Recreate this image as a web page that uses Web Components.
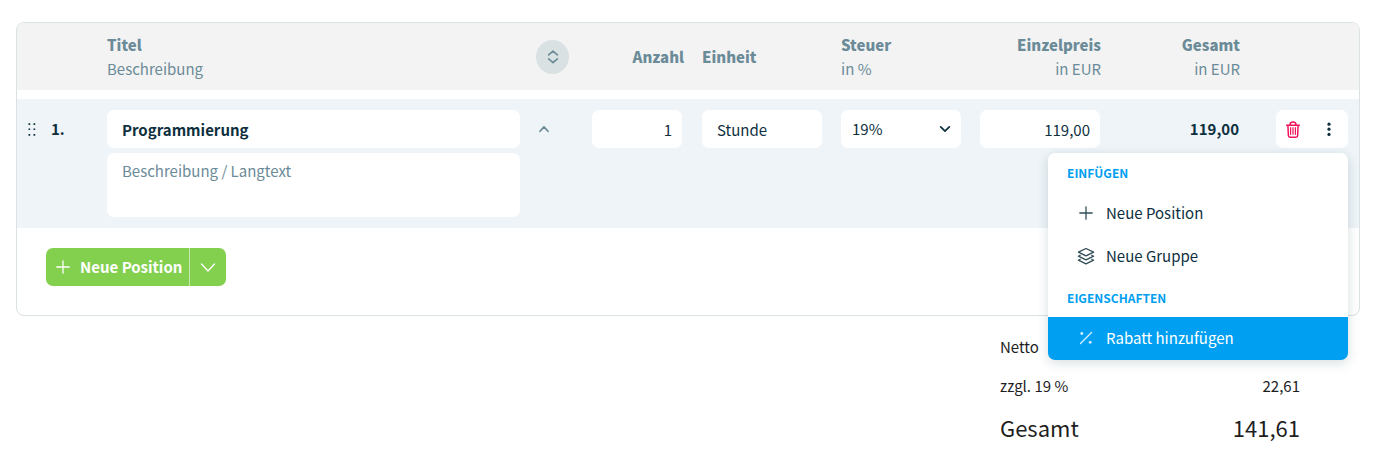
<!DOCTYPE html>
<html lang="de">
<head>
<meta charset="utf-8">
<meta name="viewport" content="width=device-width, initial-scale=1">
<title>Positionen</title>
<style>
  :root {
    --ink: #0e2f3e;
    --muted: #6b8b98;
    --line: #dae2e4;
    --head: #f3f3f3;
    --row: #eef4f8;
    --green: #83cf4e;
    --blue: #009ff1;
    --pink: #f0145a;
    --radius: 7px;
  }
  body {
    margin: 0;
    padding: 22px 17px 16px 16px;
    background: #fff;
    color: var(--ink);
    font: 400 15px/24px "Noto Sans CJK SC", "Noto Sans", sans-serif;
  }
</style>
</head>
<body>
<line-items></line-items>
<totals-panel>
  <total-row label="Netto">119,00</total-row>
  <total-row label="zzgl. 19 %">22,61</total-row>
  <total-row label="Gesamt" grand>141,61</total-row>
</totals-panel>

<script>
const define = (name, html, setup) => {
  const template = document.createElement('template');
  template.innerHTML = html;
  customElements.define(name, class extends HTMLElement {
    connectedCallback() {
      if (this.shadowRoot) return;
      this.attachShadow({ mode: 'open' }).append(template.content.cloneNode(true));
      if (setup) setup(this, this.shadowRoot);
    }
  });
};

const icons = {
  grip: '<path d="M3.500 2.200h1.700v1.700H3.500zM8.500 2.200h1.700v1.700H8.500zM3.500 7.400h1.700v1.700H3.500zM8.500 7.400h1.700v1.700H8.500zM3.500 13h1.700v1.700H3.500zM8.500 13h1.700v1.700H8.500z" fill="currentColor" stroke="none"/>',
  sort: '<path d="M3 5.600 8 1.400 13 5.600M3 10.200 8 14.400 13 10.200" stroke-width="1.900"/>',
  up: '<path d="M3.400 10.600 8 5.600l4.600 5" stroke-width="2"/>',
  down: '<path d="m3.700 5.800 4.300 4.400 4.300-4.400" stroke-width="1.700"/>',
  wide: '<path d="m1.500 5 6.500 7 6.500-7" stroke-width="1.300"/>',
  plus: '<path d="M8 1.800v12.400M1.800 8h12.400" stroke-width="1.300"/>',
  trash: '<path d="M1.600 4.200h12.800M5 4c0-4 6-4 6 0M2.900 4.400l.500 10.400c.1 1 .600 1.400 1.500 1.400h6.200c.900 0 1.400-.400 1.500-1.400l.500-10.400" stroke-width="1.500"/><path d="M5.600 6.700v6.600M8 6.700v6.600M10.400 6.700v6.600" stroke-width="1.200"/>',
  dots: '<g fill="currentColor" stroke="none"><circle cx="8" cy="3.200" r="1.600"/><circle cx="8" cy="8.200" r="1.600"/><circle cx="8" cy="13.400" r="1.600"/></g>',
  layers: '<path d="M8 .500 15.600 4.200 8 7.900.400 4.200zM2.200 7.200.400 8.200 8 11.900l7.600-3.700-1.800-1M2.200 11.200.400 12.200 8 15.900l7.600-3.700-1.800-1" stroke-width="1.300"/>',
  percent: '<path d="M2.500 13.500 13.500 2.500" stroke-width="1.400"/><g fill="currentColor" stroke="none"><circle cx="3.800" cy="3.500" r="1.400"/><circle cx="12.200" cy="12.300" r="1.400"/></g>'
};

define('ui-icon', `
  <style>
    :host { display: inline-flex; flex: none; width: 16px; height: 16px; }
    svg { width: 100%; height: 100%; fill: none; stroke: currentColor; stroke-linecap: round; stroke-linejoin: round; overflow: visible; }
  </style>
  <svg viewBox="0 0 16 16" aria-hidden="true"></svg>`,
  (host, root) => { root.querySelector('svg').innerHTML = icons[host.getAttribute('name')] || ''; });

define('icon-button', `
  <style>
    :host { display: inline-flex; }
    button { display: flex; align-items: center; justify-content: center; width: 100%; height: 100%; margin: 0; padding: 0; border: 0; border-radius: inherit; background: none; color: inherit; cursor: pointer; }
  </style>
  <button type="button"><slot></slot></button>`,
  (host, root) => root.querySelector('button').setAttribute('aria-label', host.getAttribute('label')));

define('text-field', `
  <style>
    :host { display: block; }
    input { display: block; box-sizing: border-box; width: 100%; height: 38px; margin: 0; padding: 0 10px 0 15px; border: 0; border-radius: var(--radius); background: #fff; color: inherit; font: inherit; text-align: inherit; }
  </style>
  <input type="text">`,
  (host, root) => {
    const input = root.querySelector('input');
    input.value = host.getAttribute('value') || '';
    input.setAttribute('aria-label', host.getAttribute('label'));
  });

define('note-field', `
  <style>
    :host { display: block; }
    textarea { display: block; box-sizing: border-box; width: 100%; height: 64px; margin: 0; padding: 6px 15px; border: 0; border-radius: var(--radius); background: #fff; color: inherit; font: inherit; resize: none; }
    textarea::placeholder { color: var(--muted); opacity: 1; }
  </style>
  <textarea></textarea>`,
  (host, root) => {
    const area = root.querySelector('textarea');
    area.placeholder = host.getAttribute('label');
    area.setAttribute('aria-label', host.getAttribute('label'));
  });

define('tax-select', `
  <style>
    :host { display: grid; align-items: center; }
    select, ui-icon { grid-area: 1 / 1; }
    select { appearance: none; width: 100%; height: 38px; margin: 0; padding: 0 30px 0 11px; border: 0; border-radius: var(--radius); background: #fff; color: inherit; font: inherit; }
    ui-icon { justify-self: end; margin-right: 8px; pointer-events: none; }
  </style>
  <select aria-label="Steuer in %"><option selected>19%</option></select>
  <ui-icon name="down"></ui-icon>`);

define('menu-heading', `
  <style>
    :host { display: block; padding: 8px 19px 7px; color: var(--blue); font-size: 12px; font-weight: 700; text-transform: uppercase; }
  </style>
  <slot></slot>`);

define('menu-item', `
  <style>
    :host { display: block; }
    button { display: flex; align-items: center; gap: 12px; box-sizing: border-box; width: 100%; height: 43px; margin: 0; padding: 0 30px 2px; border: 0; background: none; color: inherit; font: inherit; text-align: left; cursor: pointer; }
    ui-icon { opacity: .85; }
    :host([active]) button { background: var(--blue); color: #fff; }
  </style>
  <button type="button" role="menuitem"><ui-icon></ui-icon><slot></slot></button>`,
  (host, root) => {
    const icon = document.createElement('ui-icon');
    icon.setAttribute('name', host.getAttribute('icon'));
    root.querySelector('ui-icon').replaceWith(icon);
  });

define('context-menu', `
  <style>
    :host { display: block; width: 300px; overflow: hidden; border-radius: var(--radius); background: #fff; box-shadow: 0 3px 12px rgba(14, 47, 62, .16); }
  </style>
  <div role="menu"><slot></slot></div>`);

define('row-actions', `
  <style>
    :host { position: relative; display: flex; width: 72px; height: 38px; border-radius: var(--radius); background: #fff; }
    icon-button { flex: 1; }
    .delete { flex: none; width: 34px; color: var(--pink); }
    context-menu { position: absolute; z-index: 1; top: calc(100% + 5px); right: 0; }
  </style>
  <icon-button class="delete" label="Position löschen"><ui-icon name="trash"></ui-icon></icon-button>
  <icon-button label="Weitere Aktionen"><ui-icon name="dots"></ui-icon></icon-button>
  <context-menu>
    <menu-heading>Einfügen</menu-heading>
    <menu-item icon="plus">Neue Position</menu-item>
    <menu-item icon="layers">Neue Gruppe</menu-item>
    <menu-heading>Eigenschaften</menu-heading>
    <menu-item icon="percent" active>Rabatt hinzufügen</menu-item>
  </context-menu>`);

define('split-button', `
  <style>
    :host { display: inline-flex; overflow: hidden; border-radius: var(--radius); background: var(--green); color: #fff; }
    button { display: flex; align-items: center; height: 38px; margin: 0; border: 0; background: none; color: inherit; font: inherit; font-weight: 700; cursor: pointer; }
    .main { gap: 9px; padding: 0 7px 0 9px; }
    .more { justify-content: center; width: 37px; padding: 0; border-left: 1px solid #c8eab2; }
  </style>
  <button class="main" type="button"><ui-icon name="plus"></ui-icon><slot></slot></button>
  <button class="more" type="button" aria-label="Weitere Optionen"><ui-icon name="wide"></ui-icon></button>`);

define('line-items', `
  <style>
    :host { display: block; border: 1px solid var(--line); border-radius: 8px; background: #fff; }
    table { width: 100%; table-layout: fixed; border-collapse: separate; border-spacing: 0; }
    .c-lead { width: 90px; }
    .c-fold { width: 72px; }
    .c-count { width: 110px; }
    .c-field { width: 139px; }
    .c-tools { width: 101px; }
    th, td { padding: 0; text-align: left; font-weight: 400; }
    th { height: 67px; border-bottom: 9px solid #fff; background: var(--head); color: var(--muted); vertical-align: middle; }
    th:first-child { border-top-left-radius: var(--radius); }
    th:last-child { border-top-right-radius: var(--radius); }
    th b { display: block; font-weight: 900; }
    td { padding: 11px 0; background: var(--row); vertical-align: top; }
    .end { text-align: right; }
    th.end { padding-right: 18px; }
    td.field { padding-right: 19px; }
    td.count { padding-right: 20px; }
    .lead { display: flex; align-items: center; gap: 10px; height: 38px; padding-left: 8px; font-weight: 700; }
    .stack { display: grid; gap: 5px; }
    .stack text-field { font-weight: 700; }
    .sort { width: 33px; height: 34px; margin-left: 16px; border-radius: 50%; background: #dae1e3; vertical-align: middle; }
    .fold { width: 34px; height: 38px; margin-left: 7px; color: var(--muted); }
    .sort ui-icon, .fold ui-icon { width: 14px; height: 14px; }
    .sum { display: block; line-height: 38px; font-weight: 700; }
    td.tools { padding-left: 18px; }
    footer { padding: 20px 29px 29px; }
    split-button { display: flex; width: fit-content; }
  </style>
  <table>
    <colgroup>
      <col class="c-lead"><col><col class="c-fold"><col class="c-count">
      <col class="c-field"><col class="c-field"><col class="c-field"><col class="c-field"><col class="c-tools">
    </colgroup>
    <thead>
      <tr>
        <th></th>
        <th scope="col"><b>Titel</b>Beschreibung</th>
        <th><icon-button class="sort" label="Alle auf- oder zuklappen"><ui-icon name="sort"></ui-icon></icon-button></th>
        <th scope="col" class="end"><b>Anzahl</b></th>
        <th scope="col"><b>Einheit</b></th>
        <th scope="col"><b>Steuer</b>in %</th>
        <th scope="col" class="end"><b>Einzelpreis</b>in EUR</th>
        <th scope="col" class="end"><b>Gesamt</b>in EUR</th>
        <th></th>
      </tr>
    </thead>
    <tbody>
      <tr>
        <td><div class="lead"><ui-icon name="grip"></ui-icon>1.</div></td>
        <td><div class="stack">
          <text-field label="Titel" value="Programmierung"></text-field>
          <note-field label="Beschreibung / Langtext"></note-field>
        </div></td>
        <td><icon-button class="fold" label="Zuklappen"><ui-icon name="up"></ui-icon></icon-button></td>
        <td class="count end"><text-field label="Anzahl" value="1"></text-field></td>
        <td class="field"><text-field label="Einheit" value="Stunde"></text-field></td>
        <td class="field"><tax-select></tax-select></td>
        <td class="field end"><text-field label="Einzelpreis in EUR" value="119,00"></text-field></td>
        <td class="field end"><span class="sum">119,00</span></td>
        <td class="tools"><row-actions></row-actions></td>
      </tr>
    </tbody>
  </table>
  <footer><split-button>Neue Position</split-button></footer>`);

define('total-row', `
  <style>
    :host { display: flex; justify-content: space-between; line-height: 39px; color: #1e1e1e; font-size: 15px; }
    :host([grand]) { font-size: 22px; line-height: 44px; }
  </style>
  <span class="label"></span><span><slot></slot></span>`,
  (host, root) => { root.querySelector('.label').textContent = host.getAttribute('label'); });

define('totals-panel', `
  <style>
    :host { display: block; width: 300px; margin: 11px 60px 0 auto; }
  </style>
  <slot></slot>`);
</script>
</body>
</html>
